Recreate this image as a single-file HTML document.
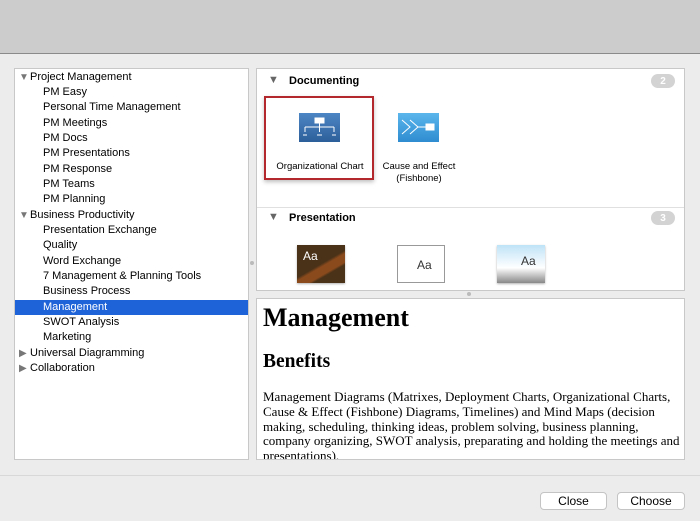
<!DOCTYPE html>
<html><head><style>
*{margin:0;padding:0;box-sizing:border-box}
body{width:700px;height:521px;background:#ececec;position:relative;overflow:hidden;font-family:"Liberation Sans",sans-serif;font-size:11px;color:#000}
.top{position:absolute;left:0;top:0;width:700px;height:54px;background:#cccccc;border-bottom:1px solid #8a8a8a}
.left{position:absolute;left:14px;top:68px;width:235px;height:392px;background:#fff;border:1px solid #c8c8c8}
.row{position:absolute;left:0;width:233px;height:15px;line-height:15px;white-space:nowrap}
.row.c{padding-left:28px}
.row.p{padding-left:15px}
.row.sel{background:#1f63d8;color:#fff}
.tri{position:absolute;left:4px;top:0;font-size:10px;color:#777}
.rp{position:absolute;left:256px;top:68px;width:429px;height:223px;background:#fff;border:1px solid #c8c8c8}
.bp{position:absolute;left:256px;top:298px;width:429px;height:162px;background:#fff;border:1px solid #c8c8c8;overflow:hidden;font-family:"Liberation Serif",serif;padding-left:7px}
.hdr{position:absolute;left:0;width:427px;height:22px;font-weight:bold;font-size:11px}
.hdr .t{position:absolute;left:11px;top:4px;font-size:11px;color:#666}
.hdr .n{position:absolute;left:32px;top:5px}
.badge{position:absolute;right:9px;top:4px;width:24px;height:14px;border-radius:7px;background:#d3d3d3;color:#fff;display:flex;align-items:center;justify-content:center;font-size:10px}
.lbl{position:absolute;font-size:9.5px;text-align:center;width:110px;line-height:12px}
.btn{position:absolute;top:492px;height:18px;background:#fff;border:1px solid #c4c4c4;border-radius:4px;text-align:center;line-height:16px;font-size:12px}
</style></head><body>
<div class="top"></div>
<div class="left">
<div class="row p" style="top:1px"><span class="tri">▼</span>Project Management</div>
<div class="row c" style="top:16px">PM Easy</div>
<div class="row c" style="top:31px">Personal Time Management</div>
<div class="row c" style="top:47px">PM Meetings</div>
<div class="row c" style="top:62px">PM Docs</div>
<div class="row c" style="top:77px">PM Presentations</div>
<div class="row c" style="top:93px">PM Response</div>
<div class="row c" style="top:108px">PM Teams</div>
<div class="row c" style="top:123px">PM Planning</div>
<div class="row p" style="top:139px"><span class="tri">▼</span>Business Productivity</div>
<div class="row c" style="top:154px">Presentation Exchange</div>
<div class="row c" style="top:169px">Quality</div>
<div class="row c" style="top:185px">Word Exchange</div>
<div class="row c" style="top:200px">7 Management &amp; Planning Tools</div>
<div class="row c" style="top:215px">Business Process</div>
<div class="row c sel" style="top:231px">Management</div>
<div class="row c" style="top:246px">SWOT Analysis</div>
<div class="row c" style="top:261px">Marketing</div>
<div class="row p" style="top:277px"><span class="tri">▶</span>Universal Diagramming</div>
<div class="row p" style="top:292px"><span class="tri">▶</span>Collaboration</div>
</div>
<div style="position:absolute;left:250px;top:261px;width:4px;height:4px;border-radius:2px;background:#bbb"></div>
<div class="rp">
<div class="hdr" style="top:1px"><span class="t">▼</span><span class="n">Documenting</span><span class="badge">2</span></div>
<div style="position:absolute;left:7px;top:27px;width:110px;height:84px;border:2px solid #b3282d;box-shadow:0 2px 4px rgba(0,0,0,.25)"></div>
<svg style="position:absolute;left:42px;top:44px" width="41" height="29"><defs><linearGradient id="g1" x1="0" y1="0" x2="0" y2="1"><stop offset="0" stop-color="#4d86c4"/><stop offset="1" stop-color="#2c5f9a"/></linearGradient></defs><rect width="41" height="29" fill="url(#g1)"/><g stroke="#fff" fill="none" stroke-width="1"><rect x="16" y="5" width="9" height="5" fill="#fff"/><path d="M20.5 10v4M6 14h29M6 14v5M20.5 14v5M35 14v5M4 22h4M18 22h5M33 22h4"/></g></svg>
<div class="lbl" style="left:8px;top:92px">Organizational Chart</div>
<svg style="position:absolute;left:141px;top:44px" width="41" height="29"><defs><linearGradient id="g2" x1="0" y1="0" x2="0" y2="1"><stop offset="0" stop-color="#5bb6ec"/><stop offset="1" stop-color="#2f8cd0"/></linearGradient></defs><rect width="41" height="29" fill="url(#g2)"/><g stroke="#fff" fill="none"><path d="M4 7l8 7-8 7M12 7l8 7-8 7M20 14h8"/><rect x="28" y="11" width="8" height="6" fill="#fff"/></g></svg>
<div class="lbl" style="left:107px;top:92px">Cause and Effect<br>(Fishbone)</div>
<div style="position:absolute;left:0;top:138px;width:427px;border-top:1px solid #e0e0e0"></div>
<div class="hdr" style="top:138px"><span class="t">▼</span><span class="n">Presentation</span><span class="badge">3</span></div>
<div style="position:absolute;left:40px;top:176px;width:48px;height:38px;background:linear-gradient(150deg,#4a3218 50%,#8b4a1c 55%,#8b4a1c 68%,#4a3218 72%);color:#fff;font-size:12px;padding:4px 6px;box-shadow:0 1px 2px rgba(0,0,0,.3)">Aa</div>
<div style="position:absolute;left:140px;top:176px;width:48px;height:38px;background:#fff;border:1px solid #999;font-size:12px;padding:12px 0 0 19px;color:#333">Aa</div>
<div style="position:absolute;left:240px;top:176px;width:48px;height:38px;background:linear-gradient(#bfe3f7,#fff 60%,#888);font-size:12px;padding:9px 0 0 24px;color:#333;box-shadow:0 1px 2px rgba(0,0,0,.3)">Aa</div>
</div>
<div style="position:absolute;left:467px;top:292px;width:4px;height:4px;border-radius:2px;background:#bbb"></div>
<div class="bp">
<div style="font-size:26px;font-weight:bold;position:absolute;left:6px;top:4px">Management</div>
<div style="font-size:19.5px;font-weight:bold;position:absolute;left:6px;top:52px">Benefits</div>
<div style="font-size:13px;line-height:14.8px;position:absolute;left:6px;top:91px;width:420px">Management Diagrams (Matrixes, Deployment Charts, Organizational Charts, Cause &amp; Effect (Fishbone) Diagrams, Timelines) and Mind Maps (decision making, scheduling, thinking ideas, problem solving, business planning, company organizing, SWOT analysis, preparating and holding the meetings and presentations).</div>
</div>
<div style="position:absolute;left:0;top:475px;width:700px;border-top:1px solid #d8d8d8"></div>
<div class="btn" style="left:540px;width:67px">Close</div>
<div class="btn" style="left:617px;width:68px">Choose</div>
</body></html>
